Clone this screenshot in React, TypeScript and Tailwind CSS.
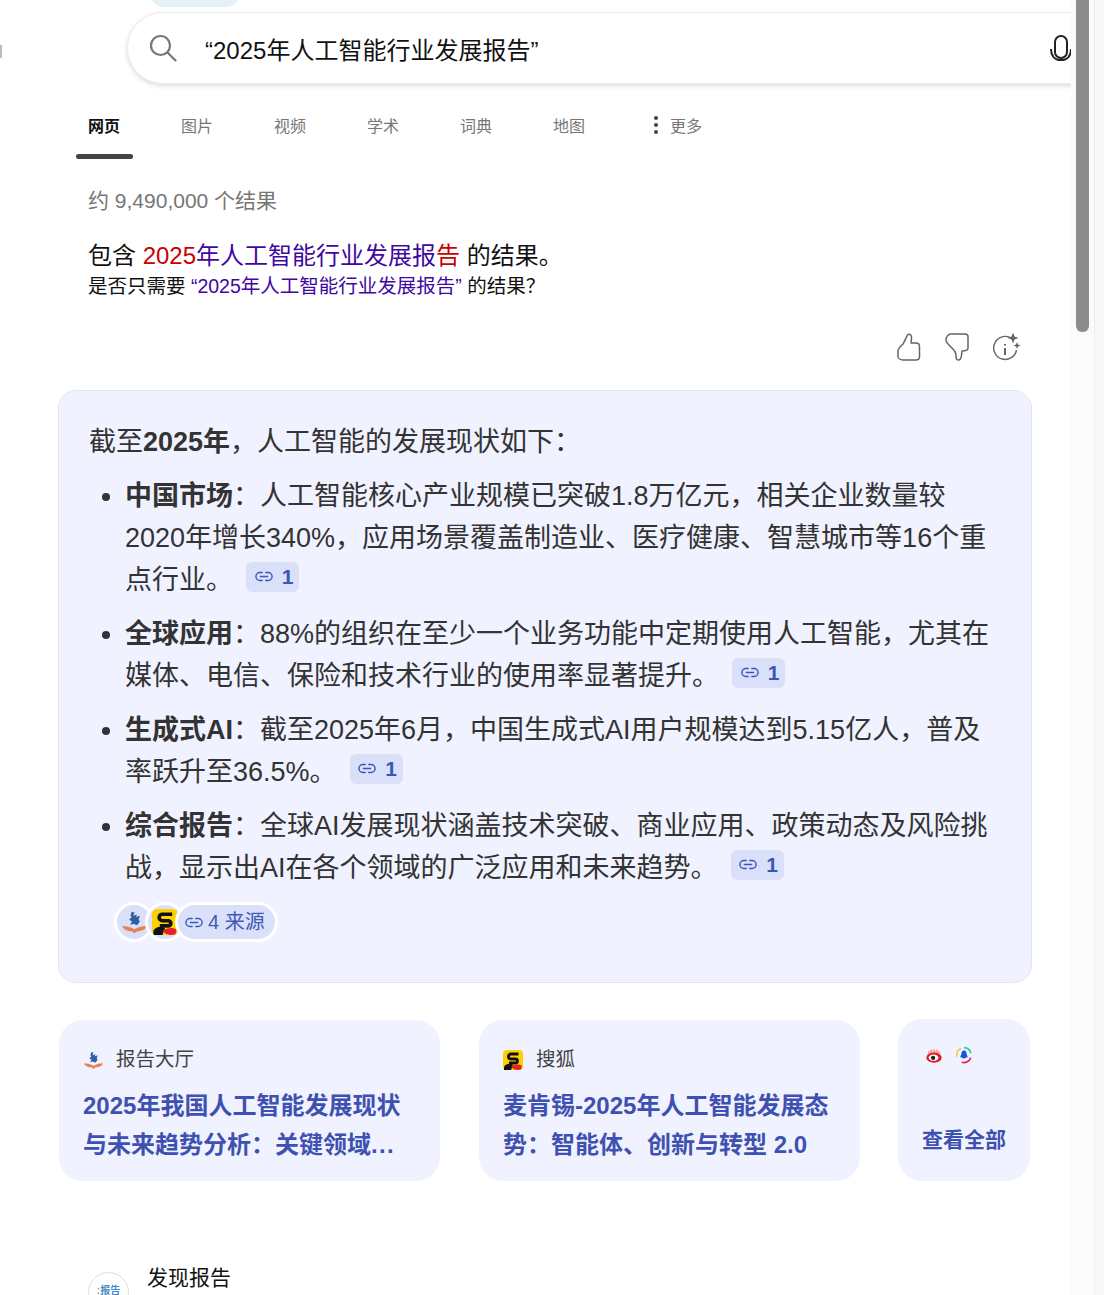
import React from "react";

function LinkIcon({ className = "" }: { className?: string }) {
  return (
    <svg viewBox="0 0 20 12" className={className} fill="none" stroke="currentColor" strokeWidth="1.600" strokeLinecap="round">
      <path d="M8 1.500H5.500a4.500 4.500 0 0 0 0 9H8" />
      <path d="M12 1.500h2.500a4.500 4.500 0 0 1 0 9H12" />
      <path d="M6 6h8" />
    </svg>
  );
}

function Cite() {
  return (
    <span className="inline-flex items-center justify-center align-[7px] w-[53px] h-[30px] ml-[13px] pl-[3px] rounded-[6px] bg-[#dbe0fa] text-[#3b57b5] gap-[9px]">
      <LinkIcon className="w-[18px] h-[11px]" />
      <span className="text-[21px] font-bold leading-none">1</span>
    </span>
  );
}

function ReportLogo({ className = "" }: { className?: string }) {
  return (
    <svg viewBox="0 0 20 20" className={className}>
      <path d="M8 2l2 .5L9 5l3-1-1 2 3-1-1 3 1 1-2 3-3-1-2 1 1-3-2-1 2-2-1-1z" fill="#2f5f9e" />
      <path d="M1 12.500c3 0 6 .7 9 2.500 3-1.800 6-2.500 9-2.500-.5 2.500-4 4-7 4l-2 1.500-2-1.500c-3 0-6.500-1.500-7-4z" fill="#e9804f" />
    </svg>
  );
}

function SohuLogo({ className = "" }: { className?: string }) {
  return (
    <svg viewBox="0 0 20 20" className={className}>
      <rect x="0" y="0" width="20" height="20" rx="4" fill="#fdd000" />
      <path d="M15.500 4H8a2.500 2.500 0 0 0 0 5h4.500a2 2 0 0 1 0 4H6" fill="none" stroke="#111" strokeWidth="2.800" />
      <path d="M1 17c2-4 7-4 9-2l-2 5H1z" fill="#111" />
      <path d="M8 17c3-2.500 8-3.500 11-1l-1 3.500c-4 1-7 .5-10-2.500z" fill="#e5202a" />
    </svg>
  );
}

function WeiboLogo({ className = "" }: { className?: string }) {
  return (
    <svg viewBox="0 0 20 20" className={className}>
      <path d="M3 9l1-4 1.500 2 1-4 2 3 1.500-3.500 1.500 3.500 2-3 1 4 1.500-2 1 4z" fill="#f59a9a" />
      <ellipse cx="10" cy="13" rx="8.500" ry="5.500" fill="#e0191e" />
      <ellipse cx="9.500" cy="13" rx="5.500" ry="3.500" fill="#fff" />
      <circle cx="9" cy="13.200" r="2.400" fill="#222" />
    </svg>
  );
}

function TencentLogo({ className = "" }: { className?: string }) {
  return (
    <svg viewBox="0 0 20 20" className={className} fill="none">
      <path d="M2.200 12A8 8 0 0 1 6.500 2.800" stroke="#f3cf12" strokeWidth="1.800" />
      <path d="M10 1.800a8 8 0 0 1 7.600 6.200" stroke="#1fcf9f" strokeWidth="1.800" />
      <path d="M17.500 13a8 8 0 0 1-10 5" stroke="#f0145a" strokeWidth="1.800" />
      <path d="M10 5c2 0 2.800 1.600 2.800 3.400 0 1 1.200 2.600 1.200 3.800 0 1-.8.600-1.400 0-.2 1-1 1.600-2.600 1.600s-2.400-.6-2.600-1.600c-.6.600-1.400 1-1.400 0 0-1.200 1.200-2.800 1.200-3.800C7.200 6.600 8 5 10 5z" fill="#1655d8" />
    </svg>
  );
}

const tabs = ["图片", "视频", "学术", "词典", "地图"];

function SourceCard({ logo, name, title }: { logo: React.ReactNode; name: string; title: React.ReactNode }) {
  return (
    <div className="w-[381px] h-[161px] rounded-[24px] bg-[#f0f2ff] pl-[24px] pr-[20px] pt-[26px]">
      <div className="flex items-center h-[28px] text-[19.500px] text-[#444]">
        <span className="w-[33px] shrink-0">{logo}</span>
        {name}
      </div>
      <div className="mt-[12px] text-[24px] font-bold leading-[39px] whitespace-nowrap text-[#3f51b0]">{title}</div>
    </div>
  );
}

export default function App() {
  return (
    <div className="relative w-[1104px] h-[1295px] overflow-hidden bg-white flex" style={{ fontFamily: '"Liberation Sans", "Noto Sans CJK SC", sans-serif' }}>
      <main className="relative w-[1071px] h-full overflow-hidden shrink-0">
        <div className="absolute left-0 top-[45px] w-[2px] h-[13px] bg-[#bbb]" />
        <div className="absolute left-[150px] top-[-20px] w-[90px] h-[27px] rounded-b-[14px] bg-[#e4f1f6]" />

        <div className="ml-[127px] mt-[12px] w-[1000px] h-[72px] rounded-[36px] border border-[#ececec] bg-white shadow-[0_2px_5px_rgba(0,0,0,0.14)] flex items-center">
          <svg viewBox="0 0 28 28" className="ml-[21px] w-[28px] h-[28px]" fill="none" stroke="#767676" strokeWidth="2.200" strokeLinecap="round">
            <circle cx="11.500" cy="11.500" r="9.500" />
            <path d="M18.500 18.500l8 8" />
          </svg>
          <span className="ml-[28px] pt-[6px] text-[24px] text-[#111]">“2025年人工智能行业发展报告”</span>
          <svg viewBox="0 0 24 30" className="absolute left-[1049px] top-[34px] w-[24px] h-[30px]" fill="none" stroke="#222" strokeWidth="2">
            <rect x="6" y="2" width="12" height="22" rx="6" />
            <path d="M2 15c0 6 3 11 10 11s10-5 10-11" strokeWidth="2" />
          </svg>
        </div>

        <nav className="ml-[76px] mt-[22px] h-[53px] flex text-[16px] text-[#767676]">
          <div className="w-[57px] h-[53px] relative pl-[12px] leading-[42px] font-bold text-[#111]">
            网页
            <div className="absolute left-0 bottom-0 w-[57px] h-[5px] rounded-full bg-[#444]" />
          </div>
          {tabs.map((t) => (
            <div key={t} className="ml-[36px] w-[57px] pl-[12px] leading-[42px]">{t}</div>
          ))}
          <div className="ml-[56px] flex items-start pt-[10px] leading-[22px] whitespace-nowrap">
            <span className="flex flex-col gap-[3px] mt-[0px] mr-[10px]">
              <i className="block w-[4px] h-[4px] rounded-full bg-[#444]" />
              <i className="block w-[4px] h-[4px] rounded-full bg-[#444]" />
              <i className="block w-[4px] h-[4px] rounded-full bg-[#444]" />
            </span>
            <span className="ml-[2px]">更多</span>
          </div>
        </nav>

        <div className="ml-[88px] mt-[27px] text-[21px] leading-[30px] text-[#767676]">约 9,490,000 个结果</div>
        <div className="ml-[88px] mt-[24px] text-[24px] leading-[32px] text-[#111]">
          包含 <span className="text-[#c80000]">2025</span><span className="text-[#4007a2]">年人工智能行业发展报</span><span className="text-[#c80000]">告</span> 的结果。
        </div>
        <div className="ml-[88px] text-[19.500px] leading-[28px] text-[#111]">
          是否只需要 <span className="text-[#4007a2]">“2025年人工智能行业发展报告”</span> 的结果？
        </div>

        <div className="ml-[897px] mt-[32px] flex h-[30px] text-[#666]">
          <svg viewBox="0 0 24 30" className="w-[24px] h-[30px]" fill="none" stroke="currentColor" strokeWidth="1.500" strokeLinejoin="round">
            <path d="M1 19c0-3 3-5 5-7 2-3 3-7 5-9.500 2-1 4 1 3.500 3.500l-.5 5h5c2 0 3.500 1 3.500 3.500v10c0 2-1 3.500-3.500 3.500H6c-3 0-5-2-5-4z" />
          </svg>
          <svg viewBox="0 0 24 30" className="ml-[24px] w-[24px] h-[30px]" fill="none" stroke="currentColor" strokeWidth="1.500" strokeLinejoin="round">
            <path d="M1 8c0-3 2-6 5-6h14c2 0 3 1 3 3v11c0 2-2 3-6 3-.5 3 0 8-3 9-3 .5-3-2-3-5 0-3-1-4-3-6-3-3-7-6-7-9z" />
          </svg>
          <svg viewBox="0 0 28 30" className="ml-[24px] w-[28px] h-[30px]" fill="none" stroke="currentColor" strokeWidth="1.400">
            <path d="M17 5.500A11.500 11.500 0 1 0 23.500 18" />
            <path d="M12 12v1.500M12 16v7" strokeWidth="2" />
            <path d="M20 .5l1.500 4 4 1.500-4 1.500-1.500 4-1.500-4-4-1.500 4-1.500z" fill="currentColor" stroke="none" />
            <path d="M24 10l1 2.500 2.500 1-2.500 1-1 2.500-1-2.500-2.500-1 2.500-1z" fill="currentColor" stroke="none" />
          </svg>
        </div>

        <section className="ml-[58px] mt-[28px] w-[974px] h-[593px] rounded-[18px] border border-[#e2e5f6] bg-[#f0f2ff] pl-[30px] pr-[40px] pt-[30px] text-[#333] text-[27px] leading-[42px]">
          <p>截至<b>2025年</b>，人工智能的发展现状如下：</p>
          <ul className="list-disc pl-[36px] mt-[12px]">
            <li><b>中国市场</b>：人工智能核心产业规模已突破1.8万亿元，相关企业数量较2020年增长340%，应用场景覆盖制造业、医疗健康、智慧城市等16个重点行业。<Cite /></li>
            <li className="mt-[12px]"><b>全球应用</b>：88%的组织在至少一个业务功能中定期使用人工智能，尤其在媒体、电信、保险和技术行业的使用率显著提升。<Cite /></li>
            <li className="mt-[12px]"><b>生成式AI</b>：截至2025年6月，中国生成式AI用户规模达到5.15亿人，普及率跃升至36.5%。<Cite /></li>
            <li className="mt-[12px]"><b>综合报告</b>：全球AI发展现状涵盖技术突破、商业应用、政策动态及风险挑战，显示出AI在各个领域的广泛应用和未来趋势。<Cite /></li>
          </ul>
          <div className="ml-[25px] mt-[13px] flex items-center h-[40px]">
            <span className="w-[40px] h-[40px] rounded-full border-[3px] border-white bg-[#dbe0fa] flex items-center justify-center overflow-hidden"><ReportLogo className="w-[27px] h-[27px]" /></span>
            <span className="ml-[-9px] w-[40px] h-[40px] rounded-full border-[3px] border-white bg-[#dbe0fa] flex items-center justify-center overflow-hidden"><SohuLogo className="w-[26px] h-[26px]" /></span>
            <span className="ml-[-10px] h-[40px] pl-[7px] pr-[10px] rounded-full border-[3px] border-white bg-[#dbe0fa] flex items-center gap-[5px] text-[20px] leading-none text-[#3f5ab5]">
              <LinkIcon className="w-[18px] h-[11px]" />
              4 来源
            </span>
          </div>
        </section>

        <div className="ml-[59px] mt-[37px] flex">
          <SourceCard logo={<ReportLogo className="w-[21px] h-[21px]" />} name="报告大厅" title={<>2025年我国人工智能发展现状<br />与未来趋势分析：关键领域<span className="tracking-[1.300px]">...</span></>} />
          <div className="ml-[39px]">
            <SourceCard logo={<SohuLogo className="w-[20px] h-[20px]" />} name="搜狐" title={<>麦肯锡-2025年人工智能发展态<br />势：智能体、创新与转型 2.0</>} />
          </div>
          <div className="ml-[38px] mt-[-1px] w-[132px] h-[162px] rounded-[24px] bg-[#f0f2ff] pl-[24px] pt-[27px]">
            <div className="flex gap-[12px] pl-[3px]">
              <WeiboLogo className="w-[18px] h-[18px]" />
              <TencentLogo className="w-[18px] h-[18px]" />
            </div>
            <div className="mt-[60px] text-[21px] font-bold leading-[32px] text-[#3f51b0]">查看全部</div>
          </div>
        </div>

        <div className="ml-[88px] mt-[84px] flex">
          <div className="mt-[7px] w-[41px] h-[41px] rounded-full border border-[#ddd] bg-white text-center text-[10px] leading-[36px] font-bold text-[#4a8ac8] shrink-0"><span className="text-[#999]">:</span>报告</div>
          <div className="ml-[18px] text-[21px] leading-[28px] text-[#111] mt-[-1px]">发现报告</div>
        </div>
      </main>

      <div className="w-[23px] h-full bg-[#fbfbfb] relative">
        <div className="absolute left-[5px] top-0 w-[13px] h-[332px] rounded-b-[6px] bg-[#8c8c8c]" />
      </div>
      <div className="w-[10px] h-full bg-[#f8f8f8] border-l border-[#eeeeee]" />
    </div>
  );
}
